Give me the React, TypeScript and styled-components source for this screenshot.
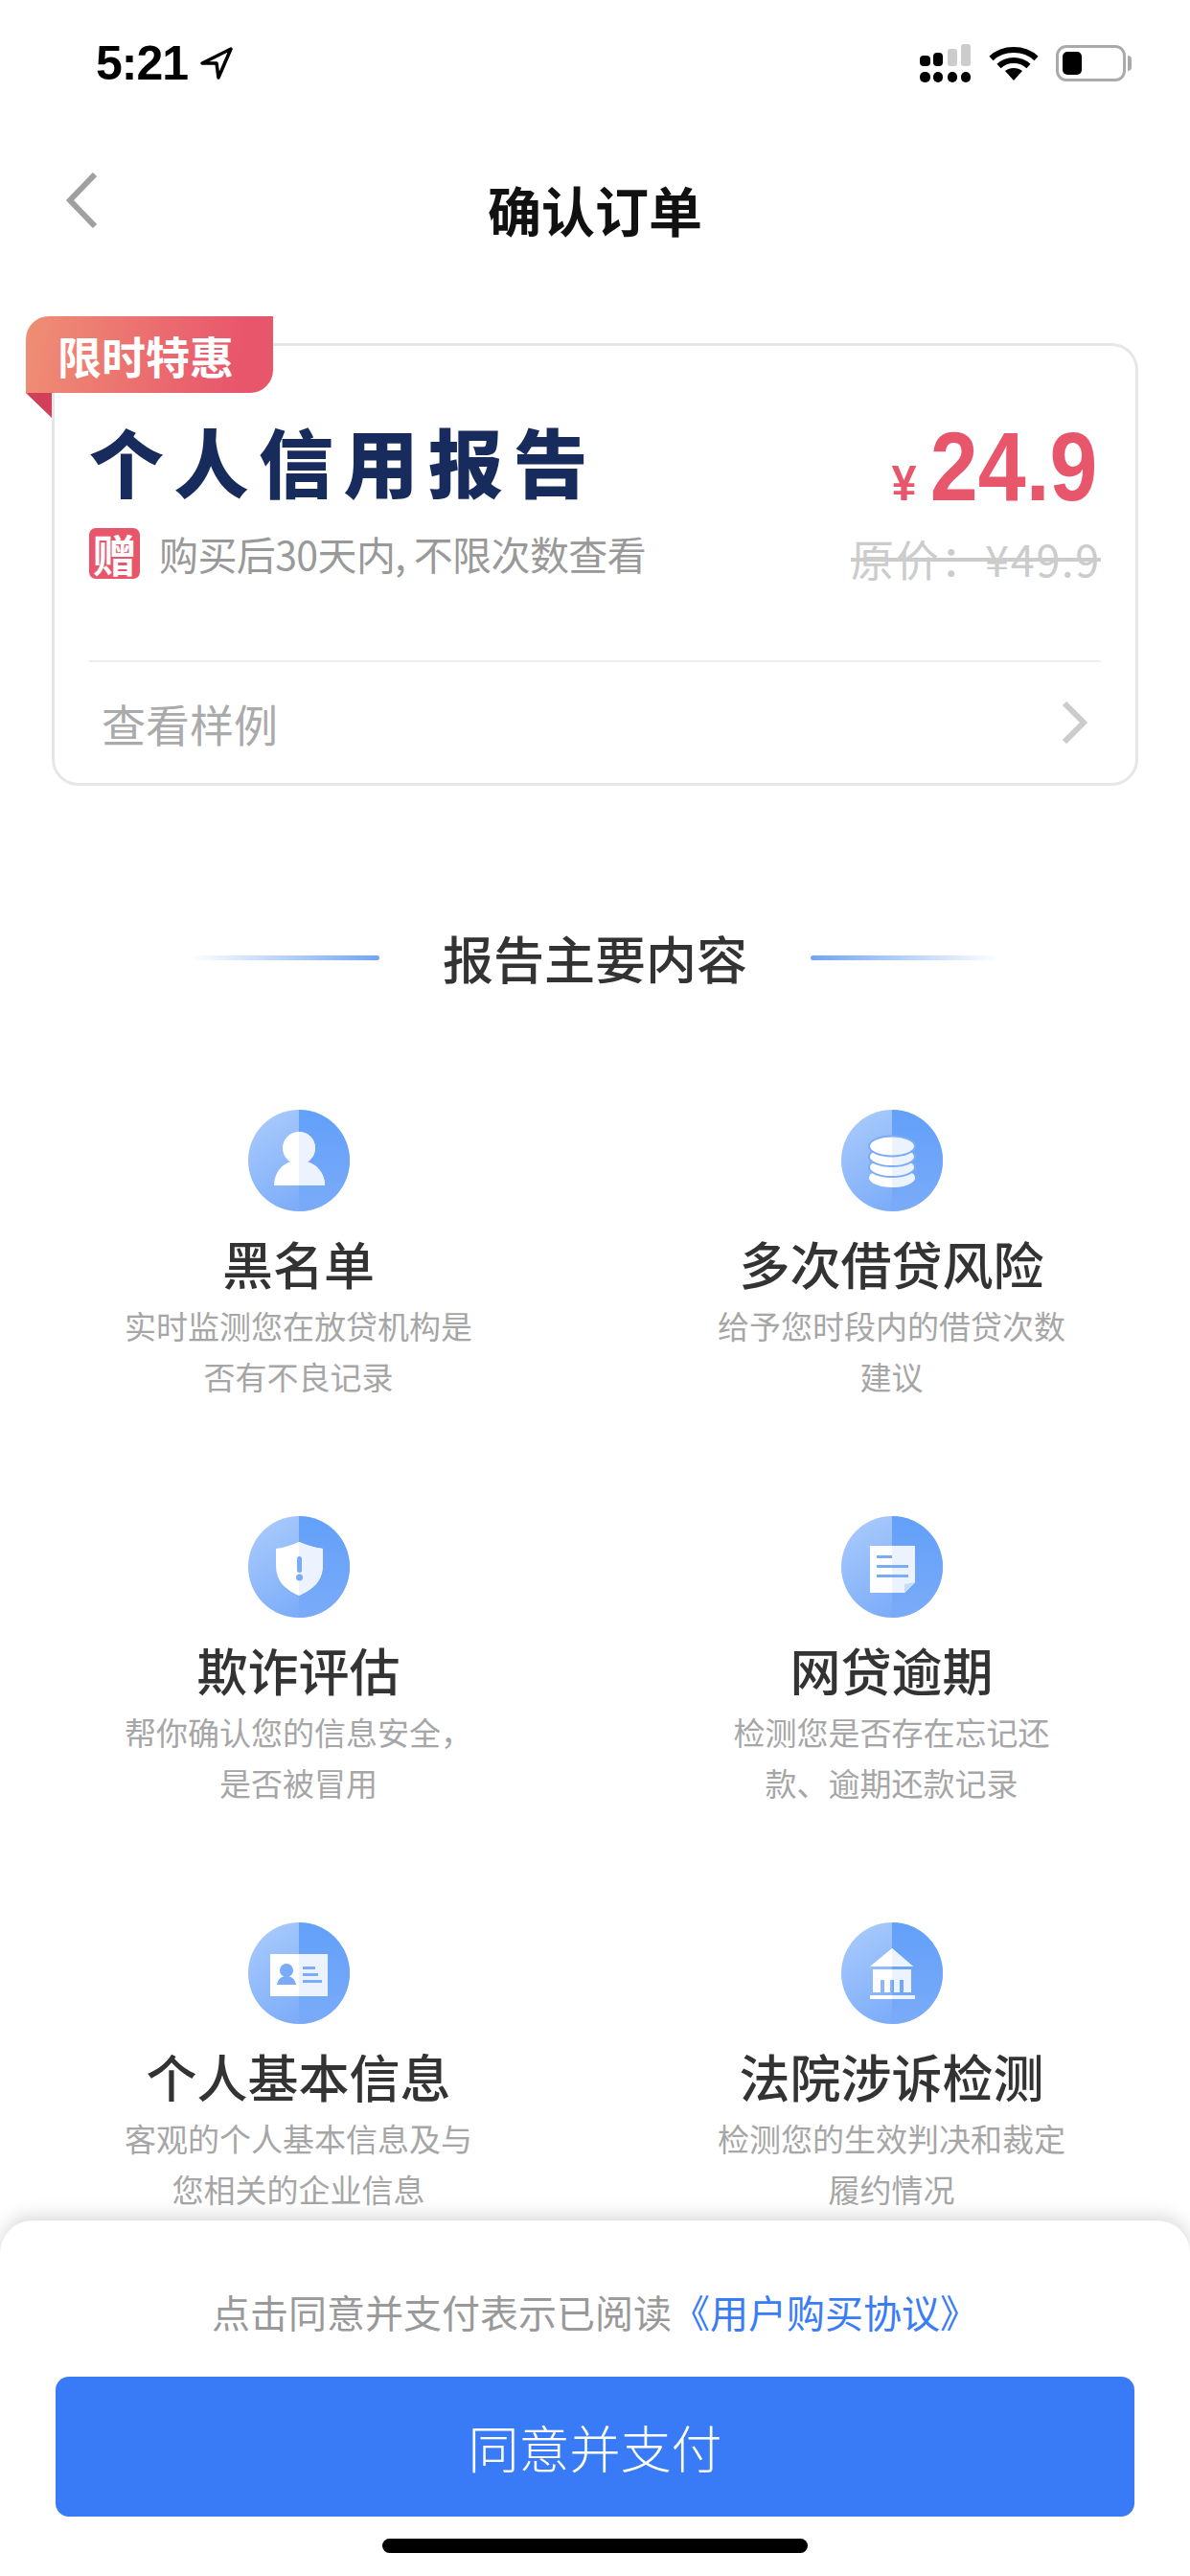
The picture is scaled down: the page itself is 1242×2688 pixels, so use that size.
import React from "react";
import styled, { createGlobalStyle } from "styled-components";

const GlobalStyle = createGlobalStyle`
  html, body {
    margin: 0;
    padding: 0;
    background: #fff;
  }
  body {
    font-family: "Noto Sans CJK SC", "Liberation Sans", sans-serif;
  }
`;

interface Feature {
  id: string;
  title: string;
  lines: string[];
  glyph: React.ReactNode;
}

const DETAIL = "#7aabf8";

const features: Feature[] = [
  {
    id: "blacklist",
    title: "黑名单",
    lines: ["实时监测您在放贷机构是", "否有不良记录"],
    glyph: (
      <>
        <circle cx="53" cy="40" r="17" />
        <path d="M27 79C27 66 35 56 46 54H60C71 56 80 66 80 79Z" />
      </>
    ),
  },
  {
    id: "loans",
    title: "多次借贷风险",
    lines: ["给予您时段内的借贷次数", "建议"],
    glyph: (
      <>
        <ellipse cx="53" cy="71" rx="24" ry="10" />
        <ellipse cx="53" cy="60" rx="24" ry="10" stroke={DETAIL} strokeWidth="2" />
        <ellipse cx="53" cy="49" rx="24" ry="10" stroke={DETAIL} strokeWidth="2" />
        <ellipse cx="53" cy="38" rx="24" ry="10.5" stroke={DETAIL} strokeWidth="2" />
      </>
    ),
  },
  {
    id: "fraud",
    title: "欺诈评估",
    lines: ["帮你确认您的信息安全，", "是否被冒用"],
    glyph: (
      <>
        <path d="M53 27C60 30 70 33 78 34V50C78 68 68 76 53 83C38 76 29 68 29 50V34C37 33 46 30 53 27Z" />
        <rect x="51" y="42" width="5" height="17" rx="2.5" fill={DETAIL} />
        <circle cx="53.5" cy="64" r="3.5" fill={DETAIL} />
      </>
    ),
  },
  {
    id: "overdue",
    title: "网贷逾期",
    lines: ["检测您是否存在忘记还", "款、逾期还款记录"],
    glyph: (
      <>
        <path d="M30 31H77V69L66 80H30Z" />
        <path d="M66 80V71L77 69Z" fill="#c5dbfb" />
        <rect x="37" y="41" width="16" height="3" fill={DETAIL} />
        <rect x="37" y="51" width="33" height="3" fill={DETAIL} />
        <rect x="37" y="61" width="33" height="3" fill={DETAIL} />
      </>
    ),
  },
  {
    id: "profile",
    title: "个人基本信息",
    lines: ["客观的个人基本信息及与", "您相关的企业信息"],
    glyph: (
      <>
        <rect x="23" y="33" width="60" height="44" />
        <circle cx="40" cy="50" r="7" fill={DETAIL} />
        <path d="M30 65C31 59 35 56 40 56C45 56 49 59 50 65Z" fill={DETAIL} />
        <rect x="57" y="46" width="13" height="3" fill={DETAIL} />
        <rect x="57" y="53" width="16" height="3" fill={DETAIL} />
        <rect x="57" y="60" width="20" height="3" fill={DETAIL} />
      </>
    ),
  },
  {
    id: "court",
    title: "法院涉诉检测",
    lines: ["检测您的生效判决和裁定", "履约情况"],
    glyph: (
      <>
        <path d="M53 27L75 46H30Z" />
        <path d="M33 49H73V73H65V60H61V73H55V60H51V73H45V60H41V73H33Z" />
        <rect x="30" y="76" width="47" height="4" />
      </>
    ),
  },
];

// Round feature badge: lighter left half, darker right half, and the glyph tinted on its right side
const FeatureBadge: React.FC<{ id: string; children: React.ReactNode }> = ({ id, children }) => (
  <BadgeSvg viewBox="0 0 106 106">
    <defs>
      <linearGradient id={`${id}-base`} x1="0.2" y1="0" x2="0.8" y2="1">
        <stop offset="0" stopColor="#a8caFC" />
        <stop offset="1" stopColor="#74a7f8" />
      </linearGradient>
      <linearGradient id={`${id}-side`} x1="0" y1="0" x2="0" y2="1">
        <stop offset="0" stopColor="#62a0fa" />
        <stop offset="1" stopColor="#7aabf8" />
      </linearGradient>
      <clipPath id={`${id}-half`}>
        <rect x="53" y="0" width="53" height="106" />
      </clipPath>
    </defs>
    <circle cx="53" cy="53" r="53" fill={`url(#${id}-base)`} />
    <path d="M53 0A53 53 0 0 1 53 106Z" fill={`url(#${id}-side)`} />
    <g fill="#fff">{children}</g>
    <g fill="#ecf3fe" clipPath={`url(#${id}-half)`}>
      {children}
    </g>
  </BadgeSvg>
);

const SignalIcon = () => (
  <svg width="54" height="40" viewBox="0 0 54 40">
    <rect x="0" y="12" width="11" height="11" rx="4" />
    <rect x="14" y="9" width="10" height="14" rx="4" />
    <rect x="29" y="5" width="10" height="18" rx="3" fill="#ccc" />
    <rect x="43" y="0" width="10" height="23" rx="3" fill="#ccc" />
    <rect x="0" y="29" width="11" height="11" rx="5" />
    <rect x="14" y="29" width="10" height="11" rx="5" />
    <rect x="29" y="29" width="10" height="11" rx="5" />
    <rect x="43" y="29" width="10" height="11" rx="5" />
  </svg>
);

const WifiIcon = () => (
  <svg width="52" height="36" viewBox="0 0 52 36" fill="none" stroke="#000" strokeWidth="6">
    <path d="M2.5 13C15 1 37 1 49.5 13" />
    <path d="M10.5 21C19 13 33 13 41.5 21" />
    <path d="M26 36L17 26C22 22 30 22 35 26Z" fill="#000" stroke="none" />
  </svg>
);

const LocationIcon = () => (
  <svg width="36" height="34" viewBox="0 0 36 34" fill="none" stroke="#000" strokeWidth="3.5" strokeLinejoin="round">
    <path d="M33 2L3 17H18L20 32Z" />
  </svg>
);

const MoreIcon = () => (
  <svg width="28" height="44" viewBox="0 0 28 44" fill="none" stroke="#ccc" strokeWidth="6">
    <path d="M3 2L23 22L3 42" />
  </svg>
);

const App: React.FC = () => (
  <Page>
    <GlobalStyle />
    <StatusBar>
      <Clock>
        <ClockText>5:21</ClockText>
        <LocationIcon />
      </Clock>
      <StatusIcons>
        <SignalIcon />
        <WifiIcon />
        <Battery>
          <BatteryFill />
        </Battery>
      </StatusIcons>
    </StatusBar>

    <NavBar>
      <BackSvg viewBox="0 0 34 58" fill="none" stroke="#a0a0a0" strokeWidth="6">
        <path d="M31 2L5 29L31 56" />
      </BackSvg>
      <NavTitle>确认订单</NavTitle>
    </NavBar>

    <Card>
      <Ribbon>限时特惠</Ribbon>
      <CardBody>
        <div>
          <ProductName>个人信用报告</ProductName>
          <GiftRow>
            <GiftTag>赠</GiftTag>
            <GiftText>购买后30天内, 不限次数查看</GiftText>
          </GiftRow>
        </div>
        <PriceBox>
          <Price>
            <Currency>¥</Currency>
            <Amount>24.9</Amount>
          </Price>
          <OldPrice>原价：¥49.9</OldPrice>
        </PriceBox>
      </CardBody>
      <CardFooter>
        <SampleLink>查看样例</SampleLink>
        <MoreIcon />
      </CardFooter>
    </Card>

    <SectionHeading>
      <HeadingLine $flip />
      <HeadingText>报告主要内容</HeadingText>
      <HeadingLine />
    </SectionHeading>

    <FeatureGrid>
      {features.map((item) => (
        <FeatureItem key={item.id}>
          <FeatureBadge id={item.id}>{item.glyph}</FeatureBadge>
          <FeatureTitle>{item.title}</FeatureTitle>
          <FeatureDesc>
            {item.lines.map((line) => (
              <div key={line}>{line}</div>
            ))}
          </FeatureDesc>
        </FeatureItem>
      ))}
    </FeatureGrid>

    <PaySheet>
      <Notice>
        点击同意并支付表示已阅读<AgreementLink>《用户购买协议》</AgreementLink>
      </Notice>
      <PayButton>同意并支付</PayButton>
      <HomeIndicator />
    </PaySheet>
  </Page>
);

export default App;

const Page = styled.div`
  position: relative;
  width: 1242px;
  height: 2688px;
  overflow: hidden;
  background: #fff;
`;

const StatusBar = styled.div`
  display: flex;
  align-items: center;
  justify-content: space-between;
  height: 132px;
  padding: 0 67px 0 100px;
  box-sizing: border-box;
`;

const Clock = styled.div`
  display: flex;
  align-items: center;
  gap: 12px;
`;

const ClockText = styled.span`
  font-family: "Liberation Sans", sans-serif;
  font-size: 50px;
  font-weight: 700;
  letter-spacing: -1px;
  line-height: 50px;
  color: #000;
`;

const StatusIcons = styled.div`
  display: flex;
  align-items: center;
  gap: 18px;
`;

const Battery = styled.div`
  position: relative;
  display: flex;
  align-items: center;
  width: 73px;
  height: 38px;
  padding: 0 4px;
  box-sizing: border-box;
  border: 3px solid #aaa;
  border-radius: 11px;

  &::after {
    content: "";
    position: absolute;
    right: -9px;
    top: 8px;
    width: 4px;
    height: 16px;
    border-radius: 0 4px 4px 0;
    background: #aaa;
  }
`;

const BatteryFill = styled.div`
  width: 20px;
  height: 24px;
  border-radius: 5px;
  background: #000;
`;

const NavBar = styled.div`
  display: grid;
  grid-template-columns: 1fr auto 1fr;
  align-items: center;
  height: 172px;
  padding-left: 68px;
  padding-right: 68px;
  box-sizing: border-box;
`;

const BackSvg = styled.svg`
  display: block;
  width: 34px;
  height: 58px;
  margin-bottom: 18px;
`;

const NavTitle = styled.h1`
  margin: 0;
  font-size: 56px;
  font-weight: 700;
  line-height: 72px;
  color: #111;
`;

const Card = styled.div`
  position: relative;
  height: 462px;
  margin: 54px 54px 0;
  padding: 0 36px;
  box-sizing: border-box;
  border: 3px solid #e6e6e6;
  border-radius: 28px;
  display: flex;
  flex-direction: column;
`;

const Ribbon = styled.div`
  position: absolute;
  left: -30px;
  top: -31px;
  width: 258px;
  height: 80px;
  padding-left: 33px;
  box-sizing: border-box;
  border-radius: 24px 0 24px 0;
  background: linear-gradient(100deg, #ef8f74, #e8566c 85%);
  font-size: 46px;
  font-weight: 700;
  line-height: 80px;
  color: #fff;

  &::after {
    content: "";
    position: absolute;
    left: 0;
    top: 80px;
    border-top: 26px solid #d23f58;
    border-left: 27px solid transparent;
  }
`;

const CardBody = styled.div`
  display: flex;
  justify-content: space-between;
  height: 328px;
  padding-top: 73px;
  box-sizing: border-box;
`;

const ProductName = styled.div`
  font-size: 78px;
  font-weight: 900;
  line-height: 92px;
  letter-spacing: 10.5px;
  color: #172b5c;
`;

const GiftRow = styled.div`
  display: flex;
  align-items: center;
  gap: 20px;
  margin-top: 25px;
`;

const GiftTag = styled.span`
  display: flex;
  align-items: center;
  justify-content: center;
  width: 53px;
  height: 53px;
  border-radius: 7px;
  background: #e8566c;
  font-size: 46px;
  font-weight: 700;
  line-height: 53px;
  color: #fff;
`;

const GiftText = styled.span`
  font-size: 41px;
  line-height: 53px;
  letter-spacing: -0.6px;
  color: #999;
`;

const PriceBox = styled.div`
  display: flex;
  flex-direction: column;
  align-items: flex-end;
`;

const Price = styled.div`
  display: flex;
  align-items: baseline;
  gap: 0;
  margin-top: 3px;
  margin-right: 3px;
  color: #e8566c;
  font-family: "Liberation Sans", sans-serif;
  font-weight: 700;
`;

const Currency = styled.span`
  font-size: 52px;
  line-height: 100px;
  transform: scaleX(0.9);
`;

const Amount = styled.span`
  font-size: 102px;
  line-height: 100px;
  margin-left: -10px;
  transform: scaleX(0.88);
  transform-origin: right;
`;

const OldPrice = styled.div`
  margin-top: -3px;
  font-size: 45px;
  line-height: 64px;
  letter-spacing: 1.7px;
  color: #ccc;
  text-decoration: line-through;
`;

const CardFooter = styled.div`
  display: flex;
  align-items: center;
  justify-content: space-between;
  flex: 1;
  padding: 0 13px;
  border-top: 2px solid #eee;
`;

const SampleLink = styled.span`
  font-size: 46px;
  line-height: 60px;
  color: #aaa;
`;

const SectionHeading = styled.div`
  display: flex;
  align-items: center;
  justify-content: center;
  gap: 66px;
  height: 78px;
  margin-top: 140px;
`;

const HeadingLine = styled.div<{ $flip?: boolean }>`
  width: 197px;
  height: 5px;
  border-radius: 3px;
  background: linear-gradient(
    ${({ $flip }) => ($flip ? "to right" : "to left")},
    rgba(110, 164, 247, 0),
    #6ea4f7
  );
`;

const HeadingText = styled.h2`
  margin: 0;
  font-size: 53px;
  font-weight: 500;
  line-height: 78px;
  color: #333;
`;

const FeatureGrid = styled.div`
  display: grid;
  grid-template-columns: 619px 619px;
  grid-auto-rows: 424px;
  margin-top: 120px;
  padding-left: 2px;
`;

const FeatureItem = styled.div`
  display: flex;
  flex-direction: column;
  align-items: center;
`;

const BadgeSvg = styled.svg`
  display: block;
  width: 106px;
  height: 106px;
`;

const FeatureTitle = styled.h3`
  margin: 18px 0 0;
  font-size: 53px;
  font-weight: 500;
  line-height: 72px;
  color: #333;
`;

const FeatureDesc = styled.div`
  margin-top: 3px;
  font-size: 33px;
  line-height: 53px;
  text-align: center;
  color: #a6a6a6;
`;

const PaySheet = styled.div`
  position: absolute;
  left: 0;
  right: 0;
  bottom: 0;
  height: 371px;
  display: flex;
  flex-direction: column;
  align-items: center;
  padding-top: 65px;
  box-sizing: border-box;
  background: #fff;
  border-radius: 34px 34px 0 0;
  box-shadow: 0 -4px 20px rgba(0, 0, 0, 0.16);
`;

const Notice = styled.div`
  font-size: 40px;
  line-height: 60px;
  color: #999;
`;

const AgreementLink = styled.span`
  color: #3a7cf6;
`;

const PayButton = styled.button`
  width: 1126px;
  height: 146px;
  margin-top: 38px;
  padding: 0;
  border: none;
  border-radius: 14px;
  background: #397bf6;
  font-family: inherit;
  font-size: 53px;
  font-weight: 300;
  color: #fff;
`;

const HomeIndicator = styled.div`
  width: 444px;
  height: 15px;
  margin-top: 23px;
  border-radius: 8px;
  background: #000;
`;
